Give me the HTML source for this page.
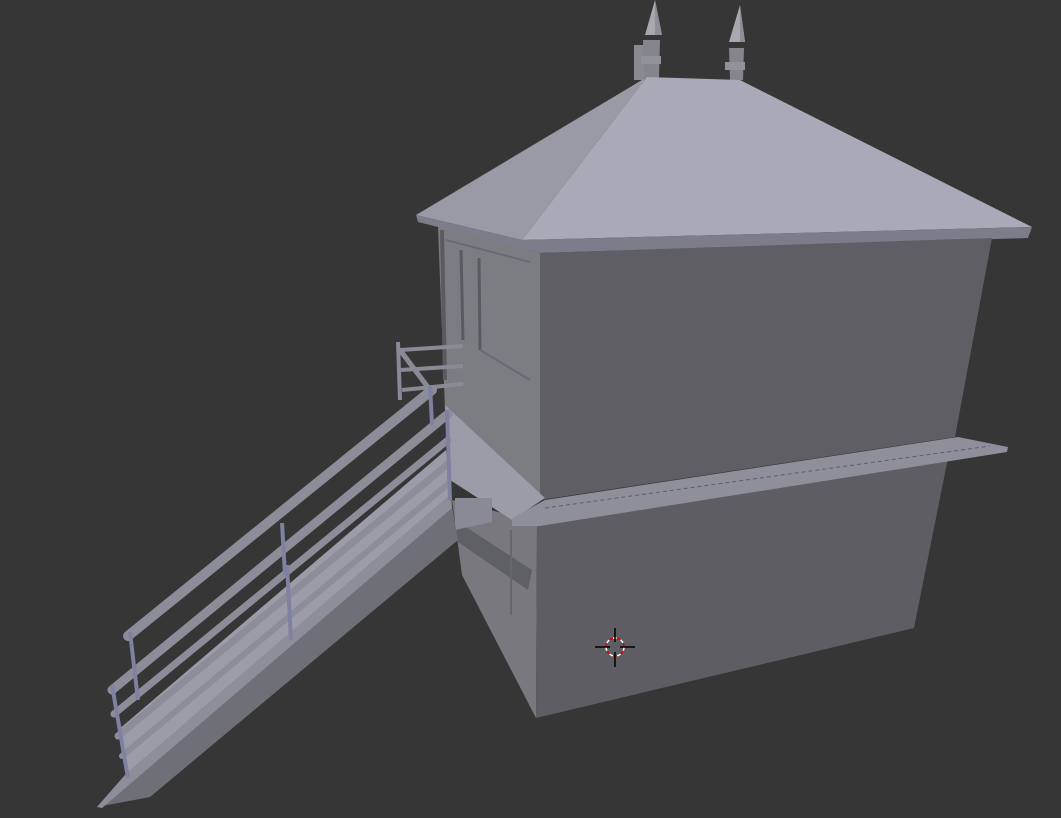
<!DOCTYPE html>
<html><head><style>html,body{margin:0;padding:0;background:#363636;overflow:hidden}svg{display:block}</style></head>
<body>
<svg width="1061" height="818" viewBox="0 0 1061 818" xmlns="http://www.w3.org/2000/svg">
<rect width="1061" height="818" fill="#363636"/>
<!-- spires -->
<g>
<rect x="634" y="45" width="10" height="35" fill="#8a8a92"/>
<polygon points="643,40 660,40 659,78 644,78" fill="#85858d"/>
<rect x="641" y="56" width="20" height="8" fill="#92929a"/>
<polygon points="655,0 645,35 662,35" fill="#a8a8b0"/>
<polygon points="655,0 655,35 662,35" fill="#8e8e96"/>
<polygon points="729,48 744,48 743,80 730,80" fill="#85858d"/>
<rect x="725" y="62" width="20" height="8" fill="#92929a"/>
<polygon points="740,5 729,42 745,42" fill="#a8a8b0"/>
<polygon points="740,5 740,42 745,42" fill="#8e8e96"/>
</g>
<!-- roof -->
<polygon points="416,215 647,77 522,240" fill="#9a9aa6"/>
<polygon points="647,77 740,80 1032,227 522,240" fill="#a9a9b7"/>
<polygon points="416,215 522,240 1032,227 1028,238 540,253 418,222" fill="#7c7c8a"/>
<!-- upper side wall -->
<polygon points="438,226 540,253 540,500 445,410" fill="#7c7c83"/>
<line x1="442" y1="230" x2="445" y2="380" stroke="#5a5a62" stroke-width="4"/>
<line x1="461" y1="250" x2="463" y2="340" stroke="#5a5a62" stroke-width="3"/>
<line x1="479" y1="258" x2="480" y2="350" stroke="#5a5a62" stroke-width="3"/>
<line x1="480" y1="350" x2="530" y2="380" stroke="#6a6a72" stroke-width="2"/>
<line x1="446" y1="240" x2="530" y2="262" stroke="#6a6a72" stroke-width="2"/>
<!-- upper front wall -->
<polygon points="540,253 992,238 955,437 540,500" fill="#5e5e64"/>
<!-- lower side wall -->
<polygon points="452,500 537,522 536,718 462,575" fill="#78787e"/>
<polygon points="455,520 532,570 528,590 455,540" fill="#5f5f66"/>
<line x1="511" y1="530" x2="511" y2="615" stroke="#66666c" stroke-width="2"/>
<!-- lower front wall -->
<polygon points="537,525 948,458 914,628 536,718" fill="#5d5d63"/>
<!-- balcony floor -->
<polygon points="445,405 545,498 512,520 450,480" fill="#9c9ca8"/>
<!-- ledge -->
<polygon points="512,518 545,500 958,437 1008,447 1007,452 540,526 512,526" fill="#8f8f9b"/>
<line x1="545" y1="508" x2="990" y2="446" stroke="#5e5e66" stroke-width="1" stroke-dasharray="4,3"/>
<polygon points="455,498 492,498 492,522 455,530" fill="#8a8a96"/>
<!-- back railing -->
<g stroke="#8a8a96" stroke-width="4">
<line x1="398" y1="342" x2="400" y2="400"/>
<line x1="400" y1="350" x2="463" y2="346"/>
<line x1="401" y1="370" x2="463" y2="366"/>
<line x1="402" y1="390" x2="463" y2="384"/>
<line x1="400" y1="350" x2="430" y2="390" stroke-width="5"/>
</g>
<!-- stairs -->
<polygon points="118,730 446,450 452,505 128,780" fill="#9c9ca8"/>
<polygon points="97,807 125,775 450,495 458,540 150,797" fill="#6f6f77"/>
<polygon points="97,807 125,775 450,495 452,508 130,784 102,808" fill="#8e8e9a"/>
<g stroke="#8d8d99" stroke-linecap="round">
<line x1="128" y1="636" x2="432" y2="390" stroke-width="10"/>
<line x1="112" y1="690" x2="448" y2="414" stroke-width="9"/>
<line x1="114" y1="714" x2="448" y2="440" stroke-width="7"/>
<line x1="118" y1="736" x2="448" y2="464" stroke-width="7"/>
<line x1="122" y1="756" x2="448" y2="484" stroke-width="6"/>
</g>
<g stroke="#8080a0" stroke-width="4">
<line x1="130" y1="632" x2="138" y2="700"/>
<line x1="112" y1="685" x2="128" y2="778"/>
<line x1="282" y1="523" x2="285" y2="575"/>
<line x1="287" y1="565" x2="291" y2="640"/>
<line x1="430" y1="385" x2="432" y2="425"/>
<line x1="447" y1="410" x2="450" y2="500"/>
</g>
<!-- cursor -->
<g>
<circle cx="615" cy="647" r="9" fill="none" stroke="#fff" stroke-width="1.5" stroke-dasharray="4,4"/>
<circle cx="615" cy="647" r="9" fill="none" stroke="#d00" stroke-width="1.5" stroke-dasharray="4,4" stroke-dashoffset="4"/>
<line x1="595" y1="647" x2="610" y2="647" stroke="#000" stroke-width="1.5"/>
<line x1="620" y1="647" x2="635" y2="647" stroke="#000" stroke-width="1.5"/>
<line x1="615" y1="628" x2="615" y2="642" stroke="#000" stroke-width="1.5"/>
<line x1="615" y1="652" x2="615" y2="667" stroke="#000" stroke-width="1.5"/>
</g>
</svg>
</body></html>
